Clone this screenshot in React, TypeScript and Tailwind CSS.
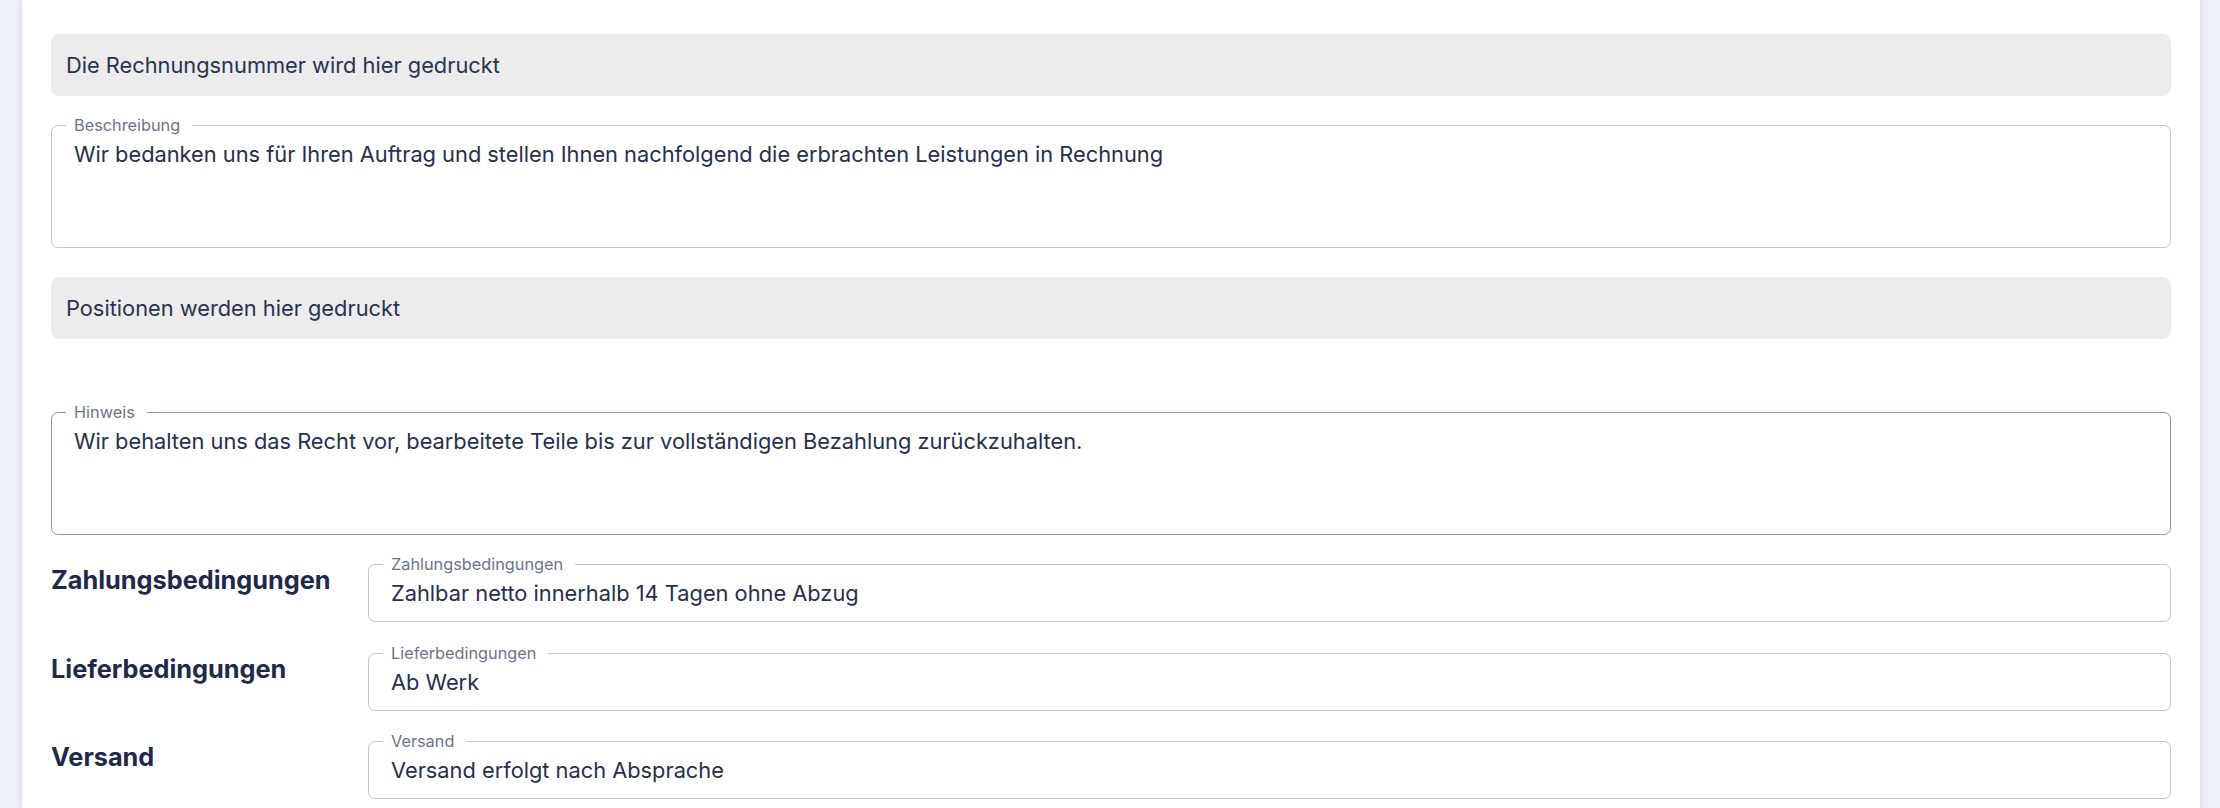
import React from 'react'

const font = { fontFamily: 'Inter, "Noto Sans", sans-serif' }

function GrayBox({ children }: { children: React.ReactNode }) {
  return (
    <div className="flex h-[62px] items-center rounded-lg bg-[#ececec] px-[15px] text-[21.8px] text-[#283350]">
      {children}
    </div>
  )
}

function Field({
  label,
  value,
  tall,
  focused,
}: {
  label: string
  value: string
  tall?: boolean
  focused?: boolean
}) {
  return (
    <fieldset
      className={`rounded-[7px] border pl-[14px] pr-[14px] ${
        focused ? 'border-[#9097a8]' : 'border-[#c6c6c6]'
      }`}
    >
      <legend className="pl-[8px] pr-[12px] text-[16.3px] leading-[16px] text-[#6b7389]">{label}</legend>
      <div
        className={`pl-[8px] pt-[7px] text-[21.8px] leading-[28px] text-[#26304d] ${
          tall ? 'h-[114px]' : 'h-[49px]'
        }`}
      >
        {value}
      </div>
    </fieldset>
  )
}

function Row({ title, label, value, className }: { title: string; label: string; value: string; className?: string }) {
  return (
    <div className={`flex items-start ${className ?? ''}`}>
      <h3 className="mt-[8px] w-[317px] shrink-0 text-[25.3px] font-bold leading-[32px] text-[#1f2a4a]">{title}</h3>
      <div className="flex-1">
        <Field label={label} value={value} />
      </div>
    </div>
  )
}

export default function App() {
  return (
    <div className="flex h-[808px] w-full overflow-hidden bg-[#eef0f7] pl-[22px] pr-[20px]" style={font}>
      <div className="flex-1 bg-white px-[29px] pt-[34px] shadow-[0_0_6px_rgba(200,204,222,0.9)]">
        <GrayBox>Die Rechnungsnummer wird hier gedruckt</GrayBox>

        <div className="mt-[21px]">
          <Field
            tall
            label="Beschreibung"
            value="Wir bedanken uns für Ihren Auftrag und stellen Ihnen nachfolgend die erbrachten Leistungen in Rechnung"
          />
        </div>

        <div className="mt-[29px]">
          <GrayBox>Positionen werden hier gedruckt</GrayBox>
        </div>

        <div className="mt-[65px]">
          <Field
            tall
            focused
            label="Hinweis"
            value="Wir behalten uns das Recht vor, bearbeitete Teile bis zur vollständigen Bezahlung zurückzuhalten."
          />
        </div>

        <Row
          className="mt-[21px]"
          title="Zahlungsbedingungen"
          label="Zahlungsbedingungen"
          value="Zahlbar netto innerhalb 14 Tagen ohne Abzug"
        />
        <Row className="mt-[23px]" title="Lieferbedingungen" label="Lieferbedingungen" value="Ab Werk" />
        <Row className="mt-[22px]" title="Versand" label="Versand" value="Versand erfolgt nach Absprache" />
      </div>
    </div>
  )
}
